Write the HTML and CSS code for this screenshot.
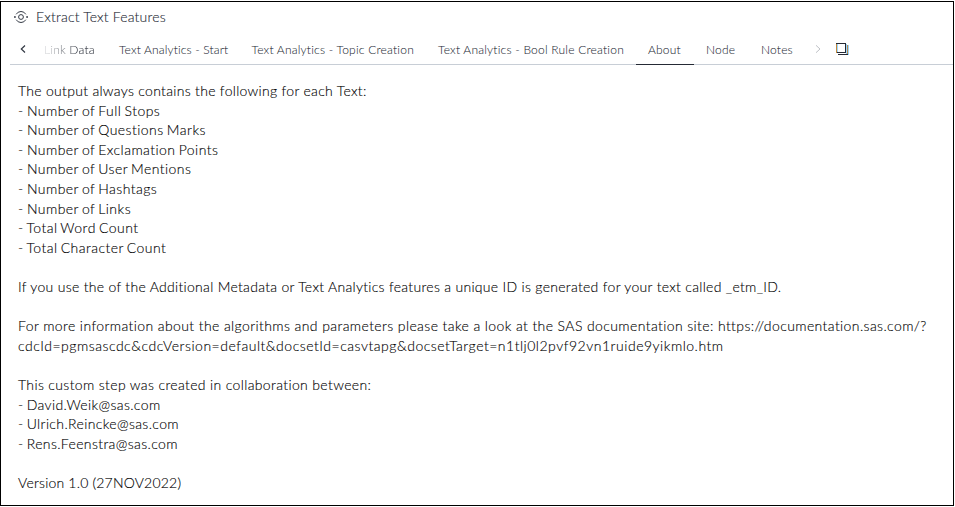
FILE: index.html
```html
<!DOCTYPE html>
<html lang="en">
<head>
<meta charset="utf-8">
<title>Extract Text Features</title>
<link rel="stylesheet" href="styles.css">
</head>
<body>
<main class="panel">
  <header class="title">
    <svg class="step-icon" width="16" height="16" viewBox="0 0 16 16" fill="none" stroke="#343a45">
      <circle cx="8" cy="8" r="2.4"/>
      <path d="M3.2 5.3A5.5 5.5 0 0 1 12.8 5.3M3.2 10.7A5.5 5.5 0 0 0 12.8 10.7"/>
      <path d="M1 8h1.8M13.2 8H15" stroke-width="1.6"/>
    </svg>
    <h1>Extract Text Features</h1>
  </header>
  <nav class="tabs">
    <svg class="prev" width="8" height="10" viewBox="0 0 8 10" fill="none" stroke="#343a45" stroke-width="1.2"><path d="M6 1.5L2.3 5 6 8.5"/></svg>
    <a class="tab link-data"><span>Link Data</span></a>
    <a class="tab start"><span>Text Analytics - Start</span></a>
    <a class="tab topic"><span>Text Analytics - Topic Creation</span></a>
    <a class="tab rule"><span>Text Analytics - Bool Rule Creation</span></a>
    <a class="tab about"><span>About</span></a>
    <a class="tab node"><span>Node</span></a>
    <a class="tab notes"><span>Notes</span></a>
    <svg class="next" width="8" height="10" viewBox="0 0 8 10" fill="none" stroke="#bfc2c7"><path d="M3 1.3l4 3.7-4 3.7"/></svg>
    <svg class="copies" width="13" height="12" viewBox="0 0 13 12" fill="none"><path d="M12.5 2v10M1.5 1v8M10.5 1v10" stroke="#9bd4fa"/><path d="M.5 0v10" stroke="#c58a3c"/><path d="M11.5 2v10" stroke="#b98a4d"/><path d="M0 .5h10M1 9.5h9M2 11.5h10M9.5 0v10" stroke="#252a35"/></svg>
  </nav>
  <section class="content">
    <p>The output always contains the following for each Text:</p>
    <p class="item metric">- Number of Full Stops</p>
    <p class="item metric">- Number of Questions Marks</p>
    <p class="item metric">- Number of Exclamation Points</p>
    <p class="item metric">- Number of User Mentions</p>
    <p class="item metric">- Number of Hashtags</p>
    <p class="item metric">- Number of Links</p>
    <p class="item metric">- Total Word Count</p>
    <p class="item metric">- Total Character Count</p>
    <p class="gap">If you use the of the Additional Metadata or Text Analytics features a unique ID is generated for your text called _etm_ID.</p>
    <p class="gap info">For more information about the algorithms and parameters please take a look at the SAS documentation site: https://documentation.sas.com/?</p>
    <p class="query">cdcId=pgmsascdc&amp;cdcVersion=default&amp;docsetId=casvtapg&amp;docsetTarget=n1tlj0l2pvf92vn1ruide9yikmlo.htm</p>
    <p class="gap authors">This custom step was created in collaboration between:</p>
    <p class="item">- David.Weik@sas.com</p>
    <p class="item">- Ulrich.Reincke@sas.com</p>
    <p class="item">- Rens.Feenstra@sas.com</p>
    <p class="gap version">Version 1.0 (27NOV2022)</p>
  </section>
</main>
</body>
</html>
```
FILE: styles.css
```css
* { box-sizing: border-box; }
body { margin: 0; padding-top: 1px; background: #fff; font-family: Lato, "Liberation Sans", sans-serif; font-weight: 300; font-variant-ligatures: none; overflow: hidden; }
.panel { width: 954px; height: 505px; border: 1px solid #000; background: #fff; }
.title { display: flex; align-items: center; gap: 7px; height: 30px; padding-left: 12px; margin-bottom: 1px; }
h1 { margin: 0; font-size: 14px; font-weight: 300; line-height: 20px; color: #252a35; letter-spacing: 0.17px; -webkit-text-stroke: 0.12px; }
.tabs { display: flex; align-items: center; height: 32px; margin-left: 9px; padding-left: 9px; border-bottom: 1px solid #c8ced6; font-size: 12px; color: #252a35; letter-spacing: 0.2px; }
.tab { display: flex; align-items: center; height: 32px; padding: 1px 0 0 12px; white-space: nowrap; flex: none; -webkit-text-stroke: 0.05px; }
.prev, .next, .copies { flex: none; }
.prev { margin-right: 5px; }
.next { margin-left: 19px; }
.copies { margin-left: 15px; }
.link-data { width: 75px; }
.link-data span { color: transparent; background: linear-gradient(90deg, #dcdddf, #252a35 70%); background-clip: text; -webkit-background-clip: text; }
.start { width: 132px; letter-spacing: 0.15px; }
.topic { width: 187px; padding-left: 12.5px; letter-spacing: 0.22px; }
.rule { width: 210px; letter-spacing: 0.22px; }
.about { width: 58px; padding-top: 2px; border-bottom: 1px solid #252a35; }
.node { width: 55px; }
.notes { width: 45px; }
.content { padding: 16px 17px; font-size: 14px; line-height: 19.6px; color: #000; white-space: nowrap; letter-spacing: 0.3px; -webkit-text-stroke: 0.12px; }
.content p { margin: 0; }
.content .gap { margin-top: 19.6px; }
.content .item { word-spacing: -1px; letter-spacing: 0.37px; }
.content .metric { letter-spacing: 0.45px; }
.content .info { letter-spacing: 0.395px; }
.content .query { letter-spacing: 0.51px; }
.content .authors { letter-spacing: 0.36px; }
.content .version { letter-spacing: 0.2px; }
```
